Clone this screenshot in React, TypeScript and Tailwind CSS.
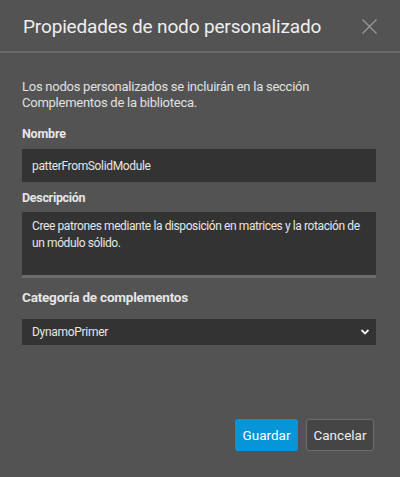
import React from "react";

export default function App() {
  return (
    <div className="w-[400px] h-[477px] bg-[#535353] flex flex-col text-[#e6e6e6]" style={{ fontFamily: 'Roboto, "Noto Sans", sans-serif' }}>
      <div className="h-[53px] flex items-center justify-between pl-[23px] pr-[23px] border-b-2 border-[#686868]">
        <div className="text-[19px] tracking-[-0.15px] text-[#eeeeee] leading-none pt-[2px]">Propiedades de nodo personalizado</div>
        <svg width="15" height="15" viewBox="0 0 15 15" className="mt-[1px]">
          <path d="M0.5 0.5 L14.5 14.5 M14.5 0.5 L0.5 14.5" stroke="#9a9a9a" strokeWidth="1.3" />
        </svg>
      </div>
      <div className="flex-1 flex flex-col pl-[22px] pr-[24px] pt-[26px]">
        <p className="text-[13px] leading-[16px] tracking-[-0.25px] text-[#e0e0e0]">Los nodos personalizados se incluirán en la sección Complementos de la biblioteca.</p>
        <div className="mt-[14px] text-[12.5px] font-bold text-[#e6e6e6] leading-[18px] tracking-[-0.2px]">Nombre</div>
        <div className="mt-[6px] h-[33px] bg-[#333333] flex items-center px-[10px] text-[12px] tracking-[-0.35px] text-[#e6e6e6]">patterFromSolidModule</div>
        <div className="mt-[7px] text-[12.5px] font-bold leading-[18px] tracking-[-0.3px]">Descripción</div>
        <div className="mt-[5px] flex flex-col">
          <div className="h-[63px] bg-[#333333] pl-[10px] pr-[6px] pt-[6px] text-[12px] leading-[17px] tracking-[-0.4px] text-[#e6e6e6]">Cree patrones mediante la disposición en matrices y la rotación de un módulo sólido.</div>
          <div className="h-[3px] bg-[#6b6b6b]"></div>
        </div>
        <div className="mt-[10px] text-[13.5px] font-bold leading-[18px] tracking-[-0.2px]">Categoría de complementos</div>
        <div className="mt-[13px] h-[26px] bg-[#333333] flex items-center justify-between pl-[10px] pr-[6px] text-[12px] tracking-[-0.3px]">
          <span>DynamoPrimer</span>
          <svg width="10" height="8" viewBox="0 0 10 8">
            <path d="M1.5 2 L5 5.5 L8.5 2" stroke="#f0f0f0" strokeWidth="1.8" fill="none" />
          </svg>
        </div>
        <div className="flex-1"></div>
        <div className="flex justify-end gap-[8px] pb-[26px] pr-[2px]">
          <button className="h-[32px] w-[63px] rounded-[3px] bg-[#0696d7] text-[13.5px] text-white">Guardar</button>
          <button className="h-[32px] w-[68px] rounded-[3px] border border-[#6e6e6e] bg-[#454545] text-[13.5px] text-[#eeeeee]">Cancelar</button>
        </div>
      </div>
    </div>
  );
}
